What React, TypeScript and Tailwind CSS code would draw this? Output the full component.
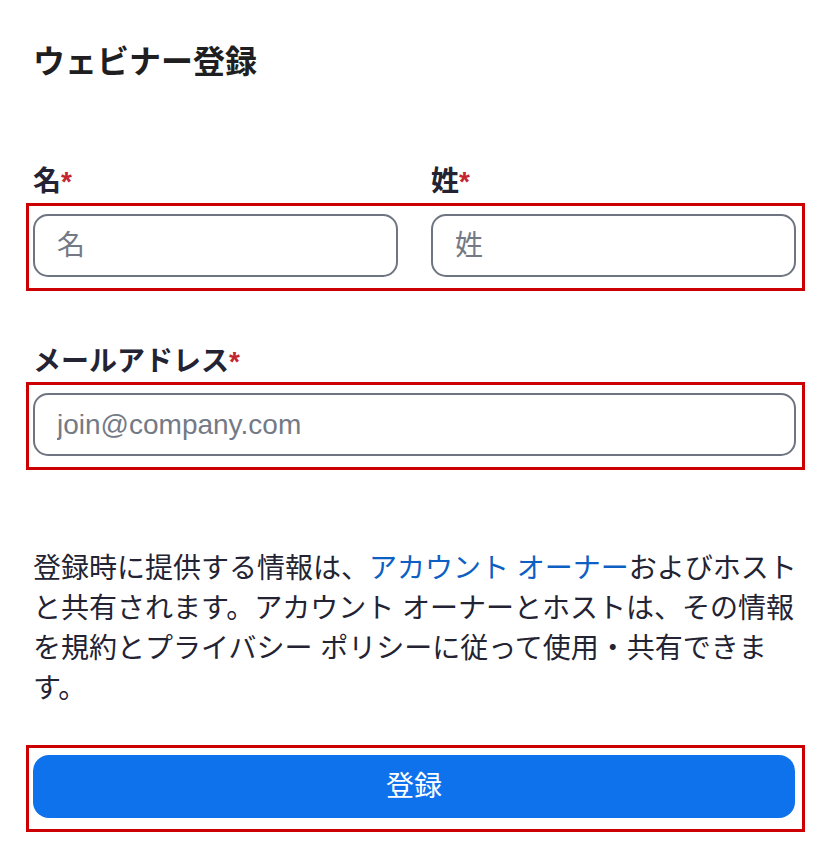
import React from "react";

const font = { fontFamily: '"Liberation Sans", "Noto Sans CJK JP", sans-serif' };

function Required() {
  return <span className="text-[#c4262e]">*</span>;
}

export default function App() {
  return (
    <div
      className="min-h-[854px] w-[828px] bg-white pl-[33px] pr-[32px] pt-[42px] text-[#232333]"
      style={font}
    >
      {/* Title */}
      <h1 className="text-[32px] font-bold leading-[40px] text-[#1f1f22]">ウェビナー登録</h1>

      {/* Name fields */}
      <div className="mt-[82px] grid grid-cols-2 gap-x-[33px]">
        <label className="mb-[3px] text-[28px] font-bold leading-[36px]">
          名<Required />
        </label>
        <label className="mb-[3px] text-[28px] font-bold leading-[36px]">
          姓<Required />
        </label>
      </div>
      <div className="-ml-[7px] -mr-[9px] border-[3px] border-[#cc0000] pb-[11px] pl-[4px] pr-[6px] pt-[8px]">
        <div className="grid grid-cols-2 gap-x-[33px]">
          <input
            placeholder="名"
            className="h-[63px] w-full rounded-[15px] border-2 border-[#6e7480] px-[22px] text-[28px] text-[#232333] outline-none placeholder:text-[#747a85]"
            style={font}
          />
          <input
            placeholder="姓"
            className="h-[63px] w-full rounded-[15px] border-2 border-[#6e7480] px-[22px] text-[28px] text-[#232333] outline-none placeholder:text-[#747a85]"
            style={font}
          />
        </div>
      </div>

      {/* Email */}
      <label className="mt-[53px] mb-[2px] block text-[28px] font-bold leading-[36px]">
        メールアドレス<Required />
      </label>
      <div className="-ml-[7px] -mr-[9px] border-[3px] border-[#cc0000] pb-[11px] pl-[4px] pr-[6px] pt-[8px]">
        <input
          placeholder="join@company.com"
          className="h-[63px] w-full rounded-[15px] border-2 border-[#6e7480] px-[22px] text-[28px] text-[#232333] outline-none placeholder:text-[#747a85]"
          style={font}
        />
      </div>

      {/* Disclaimer */}
      <p className="mt-[79px] w-[776px] text-[28px] leading-[40px] text-[#232333]">
        登録時に提供する情報は、<span className="text-[#0e5fc4]">アカウント オーナー</span>およびホストと共有されます。アカウント オーナーとホストは、その情報を規約とプライバシー ポリシーに従って使用・共有できます。
      </p>

      {/* Submit */}
      <div className="-ml-[7px] -mr-[9px] mt-[36px] border-[3px] border-[#cc0000] pb-[11px] pl-[4px] pr-[7px] pt-[7px]">
        <button
          className="flex h-[63px] w-full items-center justify-center rounded-[16px] bg-[#0e72ed] text-[28px] text-white"
          style={font}
        >
          登録
        </button>
      </div>
    </div>
  );
}
